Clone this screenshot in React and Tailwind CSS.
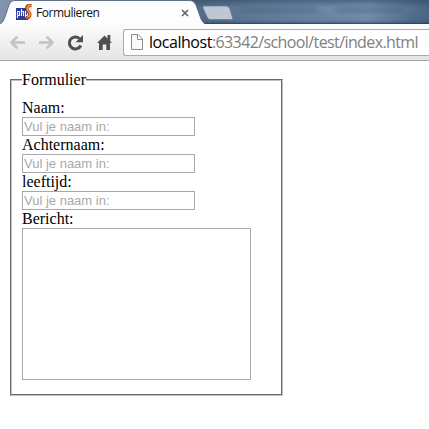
import React from 'react';

function TabStrip() {
  return (
    <div className="relative h-6 w-full overflow-hidden">
      <svg className="absolute inset-0" width="429" height="25" viewBox="0 0 429 25">
        <defs>
          <linearGradient id="glass" x1="0" x2="1" y1="0" y2="0">
            <stop offset="0" stopColor="#8594ad" />
            <stop offset="0.45" stopColor="#536b87" />
            <stop offset="0.6" stopColor="#617d9b" />
            <stop offset="0.86" stopColor="#7590af" />
            <stop offset="0.96" stopColor="#526f8f" />
            <stop offset="1" stopColor="#4b6787" />
          </linearGradient>
          <linearGradient id="shade" x1="0" x2="0" y1="0" y2="1">
            <stop offset="0" stopColor="#30475f" stopOpacity="0.55" />
            <stop offset="0.3" stopColor="#30475f" stopOpacity="0" />
            <stop offset="0.8" stopColor="#30475f" stopOpacity="0.1" />
            <stop offset="1" stopColor="#263b51" stopOpacity="0.7" />
          </linearGradient>
          <filter id="soft"><feGaussianBlur stdDeviation="3" /></filter>
        </defs>
        <rect width="429" height="25" fill="url(#glass)" />
        <rect x="190" width="239" height="25" fill="url(#shade)" />
        <g fill="#405b77" opacity="0.45" filter="url(#soft)">
          <rect x="242" y="7" width="75" height="6" />
          <rect x="336" y="7" width="66" height="6" />
        </g>
        <path d="M204 6H226Q229 6 230 9L233 19.500H210Q208 19.500 207 17L203 8Q202.500 6 204 6Z" fill="#bdc8d4" stroke="#60758b" strokeWidth="0.7" />
        <path d="M0 25V24Q3 23 5 17L9 5Q10.500 .5 14 .5H190Q194 .5 196 5L201 19Q203 24 207 24.500V25Z" fill="#fdfdfd" stroke="#4d6075" strokeWidth="0.8" />
        <path d="M205 24H429" stroke="#27394d" strokeWidth="1" />
      </svg>
      <div className="relative flex h-6 items-center pl-4 pt-[2px]">
        <svg width="17" height="17" viewBox="0 0 17 17" className="-mt-px shrink-0">
          <rect x="0" y="4" width="12" height="12" fill="#2b3b97" />
          <path d="M1.500 14V7.500H3.500V11.500H1.500M5.500 5V12M5.500 7.500H7.500V12M9.500 14V7.500H11.500V11.500H9.500" fill="none" stroke="#f0f2ff" strokeWidth="1.100" />
          <path d="M15.500 1.500Q10.500 1 10.800 4.500C11 7.500 14.200 8 13.800 11Q13.200 14 9.500 14.500" fill="none" stroke="#ab350b" strokeWidth="3.400" />
          <path d="M15.500 1.500Q11 1 11.200 4.500C11.500 7.500 14.500 8 14 11Q13.500 13 10.500 13.800" fill="none" stroke="#ff9230" strokeWidth="1.700" />
        </svg>
        <span className="ml-[3px] w-[145px] whitespace-nowrap font-['Open_Sans',sans-serif] text-[12px] leading-4 tracking-[-0.46px] text-[#111]">Formulieren</span>
        <svg width="8" height="8" viewBox="0 0 8 8" className="shrink-0"><path d="M1 1L7 7M7 1L1 7" stroke="#666" strokeWidth="1.7" /></svg>
      </div>
    </div>
  );
}

function Toolbar() {
  return (
    <div className="flex h-[37px] w-full items-center border-b border-[#a5a5a5] bg-gradient-to-b from-[#fdfdfd] to-[#e4e4e4]">
      <svg width="123" height="36" viewBox="0 24 123 36" className="shrink-0">
        <g fill="none" stroke="#c2c2c2" strokeWidth="2.600" strokeLinecap="round" strokeLinejoin="round">
          <path d="M24 42.500H12M16.500 37.500L11.500 42.500L16.500 47.500" />
          <path d="M40 42.500H52M47.500 37.500L52.500 42.500L47.500 47.500" />
        </g>
        <path d="M79.400 38.500A6 6 0 1 0 80.800 45.500" fill="none" stroke="#505050" strokeWidth="3" />
        <path d="M83 35V42.200H75.500Z" fill="#505050" />
        <path d="M97 43L104.500 35.500L107.500 38.500V35H110.300V41.300L112 43H110V50H106.300V44.500H102.700V50H99V43Z" fill="#505050" />
      </svg>
      <div className="flex h-[27px] flex-1 items-center rounded-l-[3px] border border-r-0 border-[#ababab] bg-white pl-[7px]">
        <svg width="12" height="16" viewBox="0 0 12 16" className="shrink-0">
          <path d="M.5 .5H7L11.500 5V15.500H.5ZM6.500 .5V5.500H11.500" fill="#f9f9f9" stroke="#8c8c8c" />
        </svg>
        <span className="ml-[6px] whitespace-nowrap font-['Open_Sans',sans-serif] text-[16px] leading-5 tracking-[-0.6px] text-[#808080]"><span className="tracking-[-0.46px] text-black">localhost</span>:63342/school/test/index.html</span>
      </div>
    </div>
  );
}

function Field({ label }) {
  return (
    <label className="block">
      <span className="block h-[18px] leading-[18px]">{label}</span>
      <input
        placeholder="Vul je naam in:"
        className="block h-[19px] w-[173px] border border-[#a9a9a9] bg-white px-px font-['Liberation_Sans',sans-serif] text-[13px] leading-[15px] placeholder:text-[#a9a9a9]"
      />
    </label>
  );
}

export default function App() {
  return (
    <div className="h-[429px] w-[429px] overflow-hidden bg-white">
      <TabStrip />
      <Toolbar />
      <main className="pl-[10px] pt-[18px] font-['Liberation_Serif',serif] text-[16px] text-black">
        <div className="h-[317px] w-[273px] border border-b-[#c0c0c0] border-l-[#696969] border-r-[#c0c0c0] border-t-[#696969]">
          <div className="h-[315px] w-[271px] border border-b-[#696969] border-l-[#c0c0c0] border-r-[#696969] border-t-[#c0c0c0] pl-[10px]">
            <div className="-mt-[10px] h-[18px] w-[64px] whitespace-nowrap bg-white leading-[18px]">Formulier</div>
            <div className="pt-[10px]">
              <Field label="Naam:" />
              <Field label="Achternaam:" />
              <Field label="leeftijd:" />
              <label className="block">
                <span className="block h-[18px] leading-[18px]">Bericht:</span>
                <textarea className="block h-[152px] w-[229px] resize-none border border-[#a9a9a9] bg-white p-0.5" />
              </label>
            </div>
          </div>
        </div>
      </main>
    </div>
  );
}
